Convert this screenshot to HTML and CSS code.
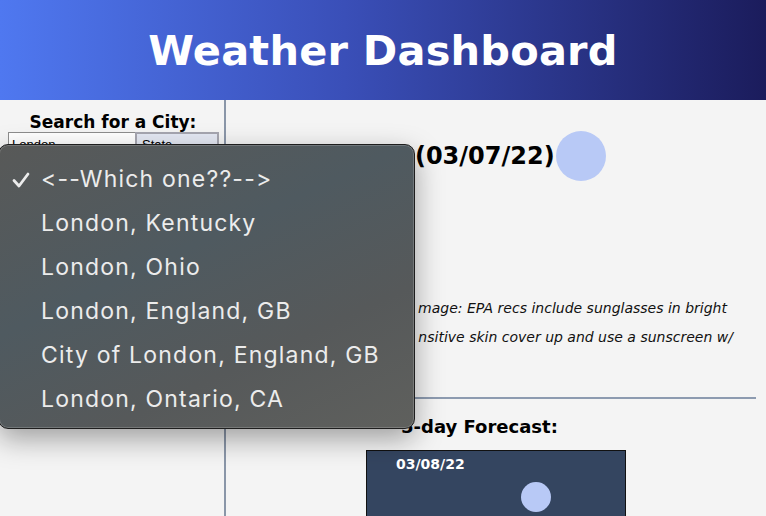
FILE: index.html
```html
<!DOCTYPE html>
<html lang="en">
<head>
<meta charset="utf-8">
<title>Weather Dashboard</title>
<link rel="stylesheet" href="styles.css">
</head>
<body>
<header class="site-header">
  <h1 class="site-title">Weather Dashboard</h1>
</header>
<div class="layout">
  <aside class="sidebar">
    <h3 class="search-title">Search for a City:</h3>
    <div class="search-row">
      <input class="city-input" type="text" value="London">
      <div class="state-select"><span>State</span><span class="chev">&#8964;</span></div>
    </div>
  </aside>
  <main class="main">
    <h2 class="today-title">London, OH (03/07/22)<span class="sun"></span></h2>
    <p class="stat">Temp: 41.5 °F</p>
    <p class="stat">Wind: 8.1 MPH</p>
    <p class="stat">Humidity: 62 %</p>
    <p class="uv">Low risk of sun da mage: EPA recs include sunglasses in bright<br>day, those with se nsitive skin cover up and use a sunscreen w/<br>SPF 30+</p>
    <hr class="divider">
    <h3 class="forecast-title">5-day Forecast:</h3>
    <div class="cards">
      <div class="card">
        <div class="card-date">03/08/22</div>
        <div class="card-icon"></div>
      </div>
    </div>
  </main>
</div>

<div class="picker">
  <div class="picker-item selected">
    <svg class="check" width="18" height="16" viewBox="0 0 18 16"><path d="M2 8.5 L7 14 L16 2" fill="none" stroke="#ececec" stroke-width="2.8" stroke-linecap="round" stroke-linejoin="round"/></svg>
    &lt;--Which one??--&gt;
  </div>
  <div class="picker-item">London, Kentucky</div>
  <div class="picker-item">London, Ohio</div>
  <div class="picker-item">London, England, GB</div>
  <div class="picker-item">City of London, England, GB</div>
  <div class="picker-item">London, Ontario, CA</div>
</div>
</body>
</html>
```

FILE: styles.css
```css
* { box-sizing: border-box; }
html, body { margin: 0; padding: 0; }
body {
  background: #f4f4f4;
  font-family: "DejaVu Sans", Verdana, sans-serif;
  color: #000;
  width: 766px;
  height: 516px;
  overflow: hidden;
  position: relative;
}
.site-header {
  height: 100px;
  background: linear-gradient(90deg, #4f78f0 0%, #3a4fb8 45%, #1b1c5c 100%);
  display: flex;
  align-items: center;
  justify-content: center;
}
.site-title {
  margin: 0;
  color: #fff;
  font-size: 41.5px;
  font-weight: bold;
  letter-spacing: 0.2px;
}
.layout {
  display: flex;
  height: 416px;
}
.sidebar {
  width: 226px;
  flex: none;
  border-right: 2px solid #8a96a8;
  padding: 12px 0 0 8px;
}
.search-title {
  margin: 0;
  font-size: 17px;
  font-weight: bold;
  text-align: center;
  padding-right: 6px;
}
.search-row { display: flex; }
.city-input {
  width: 127px;
  height: 24px;
  margin: 0;
  border: 1px solid #8d8d8d;
  border-right: none;
  background: #fff;
  font: 13px "Liberation Sans", Arial, sans-serif;
  padding: 5px 3px;
}
.state-select {
  width: 84px;
  height: 24px;
  border: 2px solid #a6a6b0;
  background: #e4e8f3;
  font: 13px "Liberation Sans", Arial, sans-serif;
  display: flex;
  justify-content: space-between;
  padding: 3px 5px;
}
.main {
  flex: 1;
  padding: 31px 10px 0 20px;
  overflow: hidden;
}
.today-title {
  margin: 0;
  padding-left: 3px;
  font-size: 24px;
  font-weight: bold;
  display: flex;
  align-items: center;
  height: 50px;
  white-space: nowrap;
}
.sun {
  display: inline-block;
  flex: none;
  width: 50px;
  height: 50px;
  border-radius: 50%;
  background: #b8c9f6;
  margin-left: 1px;
}
.stat {
  margin: 16.3px 0;
  font-size: 14px;
}
.uv {
  margin: 0 0 0 41px;
  font-size: 14px;
  font-style: italic;
  line-height: 29px;
  color: #111;
}
.divider {
  margin: 16px 0 0 0;
  border: none;
  border-top: 2px solid #8d9bb0;
}
.forecast-title {
  margin: 17px 0 0 155px;
  font-size: 18px;
  font-weight: bold;
}
.cards {
  display: flex;
  justify-content: center;
  margin-top: 13px;
  padding-right: 10px;
}
.card {
  width: 260px;
  height: 120px;
  background: #344560;
  border: 1px solid #111;
  padding: 5px 0 0 29px;
}
.card-date {
  color: #fff;
  font-size: 14px;
  font-weight: bold;
}
.card-icon {
  width: 30px;
  height: 30px;
  border-radius: 50%;
  background: #b8c9f6;
  margin: 10px 0 0 125px;
}
.picker {
  position: absolute;
  left: -2px;
  top: 144px;
  width: 417px;
  height: 285px;
  border-radius: 10px;
  border: 1px solid #1e1e1e;
  background: linear-gradient(155deg, #585958 0%, #4f5a60 40%, #56595a 70%, #5f605d 100%);
  box-shadow: inset 0 0 0 1px rgba(255,255,255,0.18), 0 10px 28px rgba(0,0,0,0.35);
  padding-top: 12px;
  font-family: Inter, "Noto Sans", sans-serif;
  font-feature-settings: "calt" 0, "liga" 0;
  font-variant-ligatures: none;
  font-size: 23px;
  letter-spacing: 1.2px;
  color: #ececec;
}
.picker-item {
  height: 44px;
  line-height: 44px;
  padding-left: 42px;
  position: relative;
}
.check {
  position: absolute;
  left: 13px;
  top: 15px;
}
```
